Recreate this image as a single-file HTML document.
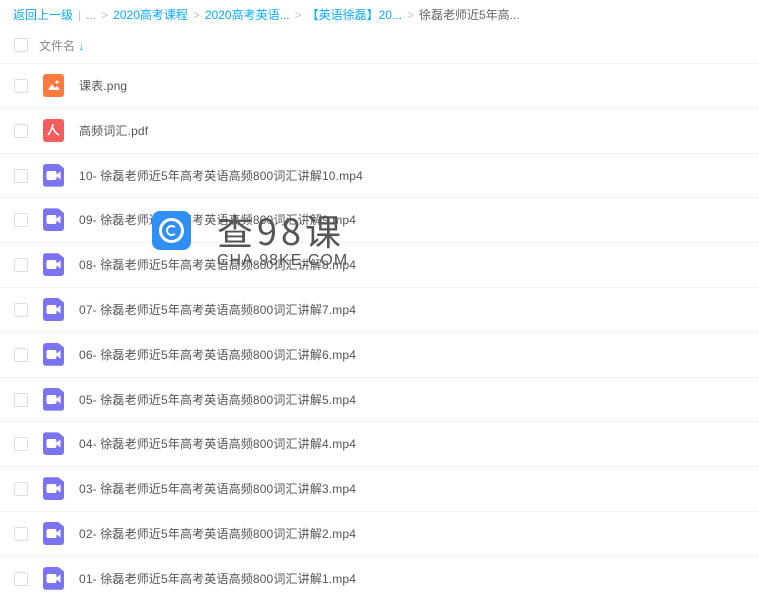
<html><head><style>
body{margin:0;width:759px;height:600px;overflow:hidden;background:#fff;font-family:"Liberation Sans","Noto Sans CJK SC",sans-serif;position:relative}
.bc{position:absolute;top:6px;left:13px;font-size:12px;color:#09aaff;white-space:nowrap}
.bc .g{color:#c0c4cc;margin:0 5px}
.bc .d{color:#666}
.cb{position:absolute;left:14px;width:12px;height:12px;border:1px solid #dcdfe6;border-radius:2px;background:#fff}
.hd{position:absolute;top:37px;left:39px;font-size:12px;color:#888}
.row{position:absolute;left:0;width:759px;height:44.8px;border-top:1px solid #f1f2f6;box-sizing:border-box}
.row .cb{top:15px}
.ic{position:absolute;left:43px;top:10px;width:21px;height:23px;border-radius:3px}
.nm{position:absolute;left:79px;top:13px;font-size:12px;color:#555;letter-spacing:0.15px}
.wm{position:absolute;left:152px;top:207px}
</style></head><body>
<div class="bc">返回上一级<span class="g">|</span><span style="color:#999">...</span><span class="g">&gt;</span>2020高考课程<span class="g">&gt;</span>2020高考英语...<span class="g">&gt;</span>【英语徐磊】20...<span class="g">&gt;</span><span class="d">徐磊老师近5年高...</span></div>
<div class="cb" style="top:38px"></div>
<div class="hd">文件名 <span style="color:#09aaff;font-weight:bold">↓</span></div>
<div id="rows"></div>
<script>
var names=["课表.png","高频词汇.pdf"];
for(var i=10;i>=1;i--)names.push((i<10?"0"+i:i)+"- 徐磊老师近5年高考英语高频800词汇讲解"+i+".mp4");
var h="";
names.forEach(function(n,k){
var top=63+k*44.8;
var ic;
if(k==0)ic='<div class="ic" style="background:#ff7a3c"><svg width="21" height="23"><path d="M5 16 L9 10 L12 14 L14 12 L17 16Z" fill="#fff"/><circle cx="14" cy="8" r="1.5" fill="#fff"/></svg></div>';
else if(k==1)ic='<div class="ic" style="background:#f55d5d"><svg width="21" height="23"><path d="M10 5 Q9 11 5 16 M10 9 Q12 14 16 16" stroke="#fff" stroke-width="1.6" fill="none"/></svg></div>';
else ic='<div class="ic" style="background:#7a74f0;clip-path:polygon(0 0,72% 0,100% 20%,100% 100%,0 100%)"><svg width="21" height="23"><rect x="3.5" y="7" width="10" height="9" rx="2" fill="#fff"/><path d="M12.5 11.5 L17.5 7.5 V15.5Z" fill="#fff"/></svg></div>';
h+='<div class="row" style="top:'+top+'px"><div class="cb"></div>'+ic+'<div class="nm">'+n+'</div></div>';
});
document.getElementById("rows").innerHTML=h;
</script>
<div class="wm">
<div style="position:absolute;left:0;top:4px;width:39px;height:39px;border-radius:8px;background:#2f8ff5"></div>
<div style="position:absolute;left:7px;top:11px;width:19px;height:19px;border:3px solid #fff;border-radius:50%"></div>
<div style="position:absolute;left:14px;top:18px;width:7px;height:7px;border:2.5px solid #fff;border-radius:50%;border-right-color:transparent"></div>
<div style="position:absolute;left:65px;top:-3px;font-size:36px;color:#555;letter-spacing:4px;white-space:nowrap;font-family:'Noto Sans CJK SC',sans-serif">查98课</div>
<div style="position:absolute;left:65px;top:45px;font-size:16px;color:#555;letter-spacing:1px">CHA.98KE.COM</div>
</div>
</body></html>
